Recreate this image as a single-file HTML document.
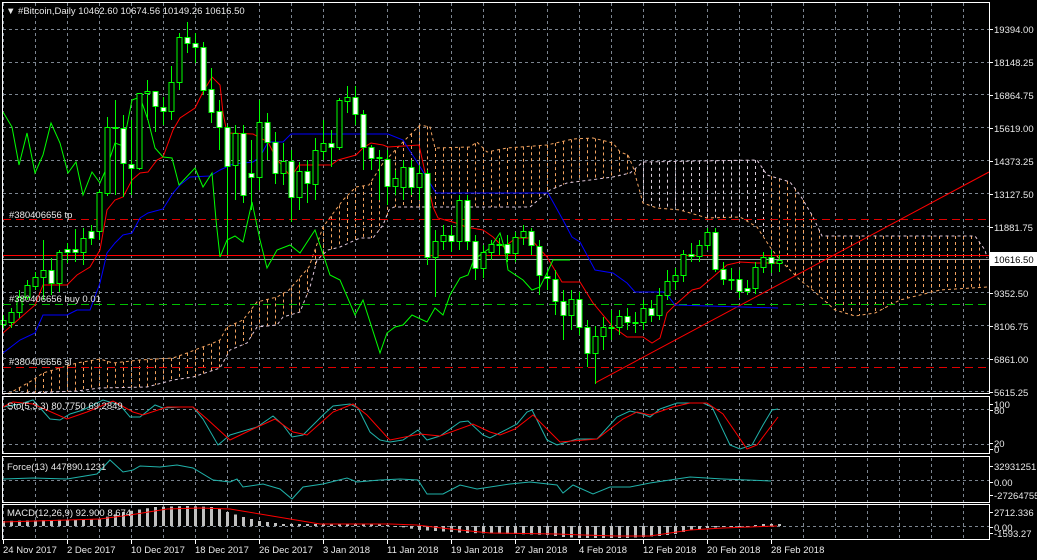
<!DOCTYPE html>
<html><head><meta charset="utf-8"><style>
html,body{margin:0;padding:0;background:#000;width:1037px;height:560px;overflow:hidden}
svg{display:block}
text{font-family:"Liberation Sans",sans-serif;font-size:9.5px;fill:#e8e8e8}
</style></head><body>
<svg id="s" width="1037" height="560" xmlns="http://www.w3.org/2000/svg">
<rect width="1037" height="560" fill="#000"/>
<g id="grid" stroke="#7c8590" stroke-width="1" stroke-dasharray="3,3"></g>
<g id="cloud"></g>
<g id="lines" fill="none"></g>
<g id="candles"></g>
<g id="ind" fill="none"></g>
<g id="frame" fill="none" stroke="#fff"></g>
<g id="txt"></g>
</svg>
<script>
var NS="http://www.w3.org/2000/svg";
function el(p,t,a,txt){var e=document.createElementNS(NS,t);for(var k in a)e.setAttribute(k,a[k]);if(txt!=null)e.textContent=txt;document.getElementById(p).appendChild(e);return e;}
function pl(p,pts,a){var s=pts.map(function(q){return q[0]+","+q[1]}).join(" ");a.points=s;a.fill="none";return el(p,"polyline",a);}
function interp(pts,x){if(x<=pts[0][0])return pts[0][1];for(var i=1;i<pts.length;i++){if(x<=pts[i][0]){var a=pts[i-1],b=pts[i];return a[1]+(b[1]-a[1])*(x-a[0])/(b[0]-a[0]);}}return pts[pts.length-1][1];}
var hy=[29,62,94,127,160,193,226,259,292,325,358,391];
hy.forEach(function(y){el("grid","line",{x1:3,y1:y+.5,x2:989,y2:y+.5});});
[409,444,480,526].forEach(function(y){el("grid","line",{x1:3,y1:y+.5,x2:989,y2:y+.5});});
for(var x=3;x<989;x+=32){[[3,394],[397,454],[458,502],[505,539]].forEach(function(r){el("grid","line",{x1:x+.5,y1:r[0],x2:x+.5,y2:r[1]});});}
var spanA=[[2,394],[10,393],[33,380],[43,373],[77,363],[100,359],[113,363],[140,360],[173,358],[187,353],[213,343],[220,340],[227,327],[243,320],[257,302],[277,297],[289,290],[309,267],[323,227],[343,200],[356,187],[369,185],[383,163],[403,142],[420,125],[430,127],[435,148],[470,147],[477,142],[487,152],[507,148],[547,145],[573,139],[593,138],[613,143],[620,152],[628,155],[633,167],[643,203],[657,208],[680,210],[697,215],[707,218],[740,217],[757,227],[770,247],[780,260],[800,280],[815,292],[835,310],[855,316],[875,313],[900,300],[940,290],[987,287]];
var spanB=[[2,394],[77,391],[100,388],[147,387],[173,380],[193,377],[220,368],[230,350],[247,343],[257,327],[277,325],[283,317],[300,312],[310,287],[317,260],[328,250],[340,247],[360,238],[373,238],[383,225],[389,210],[394,207],[530,207],[550,190],[567,183],[613,177],[630,173],[643,162],[757,160],[767,175],[790,182],[800,195],[812,215],[822,236],[840,236],[975,236],[985,250],[987,258]];
for(var x=11;x<987;x+=8){var a=interp(spanA,x),b=interp(spanB,x);var c=(x>640&&x<770)?"#dcd0dc":"#f4a460";el("cloud","line",{x1:x+.5,y1:Math.min(a,b),x2:x+.5,y2:Math.max(a,b),stroke:c,"stroke-dasharray":"3,3"});}
pl("cloud",spanA,{stroke:"#f4a460","stroke-dasharray":"3,3"});
pl("cloud",spanB,{stroke:"#e0c8dc","stroke-dasharray":"3,3"});
el("lines","line",{x1:3,y1:219.5,x2:989,y2:219.5,stroke:"#e00000","stroke-dasharray":"8,5"});
el("lines","line",{x1:3,y1:367.5,x2:989,y2:367.5,stroke:"#e00000","stroke-dasharray":"8,5"});
el("lines","line",{x1:3,y1:304.5,x2:989,y2:304.5,stroke:"#00c000","stroke-dasharray":"8,5"});
el("lines","line",{x1:3,y1:255.5,x2:989,y2:255.5,stroke:"#ff0000"});
el("lines","line",{x1:3,y1:259.5,x2:989,y2:259.5,stroke:"#a0a0a0"});
el("lines","line",{x1:595,y1:383,x2:989,y2:172,stroke:"#ff0000"});
pl("lines",[[3,333],[35,305],[43,285],[67,285],[77,275],[90,267],[100,250],[107,210],[115,200],[123,197],[132,180],[140,173],[148,172],[157,160],[163,157],[173,130],[180,118],[195,108],[203,92],[212,77],[220,85],[223,113],[227,133],[253,134],[268,142],[276,158],[291,177],[299,165],[331,165],[338,160],[356,155],[363,148],[371,143],[383,145],[388,147],[419,145],[423,163],[426,177],[433,207],[438,218],[456,223],[466,227],[483,230],[493,237],[499,243],[504,247],[516,238],[530,238],[538,247],[547,257],[562,282],[580,282],[593,303],[613,327],[627,337],[643,337],[652,343],[660,338],[667,313],[675,305],[692,290],[700,288],[713,277],[727,265],[740,262],[757,263],[780,263]],{stroke:"#ff0000"});
pl("lines",[[3,353],[20,340],[35,333],[43,315],[67,315],[77,310],[90,310],[100,283],[107,253],[115,243],[123,235],[132,233],[140,218],[148,213],[163,209],[173,193],[180,185],[190,177],[210,176],[220,170],[233,164],[253,162],[260,157],[268,142],[283,142],[291,134],[388,134],[403,140],[408,148],[419,165],[436,193],[548,193],[563,220],[572,237],[580,242],[595,270],[613,273],[627,283],[635,292],[665,292],[675,305],[778,308]],{stroke:"#0000ff"});
pl("lines",[[3,112],[12,127],[19,165],[27,133],[35,173],[43,155],[51,123],[60,143],[68,173],[76,162],[83,195],[92,172],[100,183],[107,167],[115,143],[123,146],[132,100],[140,97],[148,120],[155,148],[163,157],[172,158],[179,185],[195,168],[203,187],[212,173],[216,220],[220,257],[227,240],[235,236],[243,242],[252,202],[260,240],[267,268],[277,250],[290,245],[300,253],[315,230],[330,275],[340,280],[355,315],[363,300],[380,353],[387,333],[395,327],[403,325],[412,315],[427,322],[435,308],[443,315],[450,295],[460,278],[468,275],[473,262],[480,255],[490,248],[500,233],[505,250],[508,270],[523,280],[532,290],[540,287],[547,273],[553,260],[570,260]],{stroke:"#00ff00"});
var C=[[324,320,315,328],[322,312,308,328],[312,297,290,318],[297,285,280,300],[286,277,272,290],[277,270,240,300],[270,283,258,295],[283,252,250,292],[249,252,243,263],[249,252,229,262],[252,238,228,265],[231,238,225,245],[231,192,190,240],[193,127,117,196],[128,127,100,195],[128,163,115,197],[164,168,120,195],[168,93,93,170],[93,91,80,120],[91,106,91,132],[107,111,97,125],[111,82,66,120],[82,37,33,90],[37,43,22,53],[43,47,33,63],[47,90,42,95],[89,112,68,123],[111,127,100,150],[127,166,125,255],[165,133,125,200],[133,195,125,203],[173,177,140,210],[177,122,100,190],[122,142,113,160],[142,173,132,184],[173,161,143,185],[161,197,150,222],[197,171,162,210],[171,183,160,203],[184,150,138,200],[151,143,120,160],[143,147,130,167],[147,100,98,150],[101,97,86,113],[97,114,86,125],[114,147,110,170],[147,158,145,170],[158,157,150,200],[159,186,150,205],[186,178,170,195],[187,167,160,200],[167,187,160,195],[187,173,165,200],[173,257,170,265],[257,241,230,297],[241,235,225,250],[235,241,225,252],[241,200,195,250],[200,241,195,250],[241,268,235,280],[268,252,245,278],[252,244,240,260],[245,244,238,255],[244,253,235,262],[253,237,232,262],[237,231,225,245],[231,245,228,255],[246,275,240,295],[276,278,270,290],[279,301,270,315],[301,315,290,340],[315,299,290,330],[299,327,292,335],[327,353,320,367],[353,336,326,384],[336,327,317,350],[327,327,310,340],[327,316,310,335],[316,322,308,330],[322,322,312,333],[322,308,300,330],[308,315,300,322],[315,295,288,320],[295,281,270,300],[281,275,268,290],[275,254,250,282],[254,256,243,262],[256,245,240,262],[245,232,228,250],[232,269,228,272],[269,279,262,285],[279,279,268,290],[279,291,270,298],[288,291,280,295],[288,267,262,294],[267,257,252,273],[257,263,250,273],[263,260,255,272]];
C.forEach(function(c,i){var x=3+8*i;var o=c[0],cl=c[1];el("candles","line",{x1:x+.5,y1:c[2],x2:x+.5,y2:c[3],stroke:"#00ff00"});
var top=Math.min(o,cl),h=Math.max(1,Math.abs(o-cl));var bear=cl>o;
el("candles","rect",{x:x-2.5+.5,y:top+.5,width:5,height:h,fill:bear?"#fff":"#000",stroke:"#00ff00"});});
pl("ind",[[3,407],[20,404],[33,400],[50,419],[60,420],[70,414],[83,410],[103,400],[120,405],[130,417],[140,417],[155,405],[163,408],[180,407],[193,407],[203,419],[218,445],[230,435],[240,432],[257,427],[273,416],[283,425],[292,437],[303,435],[323,415],[333,406],[350,404],[358,408],[370,432],[380,440],[390,442],[403,440],[418,430],[427,440],[440,436],[460,422],[468,421],[483,435],[490,438],[517,424],[527,412],[532,410],[547,440],[557,445],[577,439],[597,439],[617,417],[630,411],[643,414],[650,417],[660,409],[677,403],[703,403],[712,407],[730,445],[740,449],[752,445],[763,425],[772,410],[778,409]],{stroke:"#20b2aa"});
pl("ind",[[3,407],[13,402],[33,404],[67,419],[87,412],[113,401],[133,412],[143,415],[167,407],[193,407],[207,419],[230,440],[253,429],[275,419],[293,432],[307,435],[333,412],[353,404],[367,415],[387,437],[390,440],[420,434],[440,436],[473,424],[490,432],[500,435],[515,429],[533,415],[547,429],[560,442],[597,439],[623,419],[637,412],[650,415],[673,407],[690,403],[707,403],[723,414],[747,449],[757,445],[778,417]],{stroke:"#ff0000"});
pl("ind",[[3,479],[33,478],[67,479],[97,474],[110,460],[123,472],[133,470],[140,466],[160,467],[177,465],[193,468],[213,480],[230,482],[237,479],[243,487],[263,484],[280,489],[292,499],[303,487],[323,484],[347,478],[357,482],[380,480],[400,479],[418,480],[427,494],[443,494],[460,485],[477,489],[510,484],[530,482],[557,485],[563,493],[573,485],[593,494],[610,487],[630,487],[650,483],[690,477],[723,479],[771,481]],{stroke:"#20b2aa"});
var H=[[0,521],[12,519],[15,512],[19,507],[23,506],[26,507],[27,509],[28,512],[30,517],[32,521],[35,524],[47,524],[49,526],[52,530],[58,533],[64,534],[68,535],[70,537],[72,538],[78,538],[82,536],[84,534],[86,530],[88,528],[90,527],[93,526],[95,524],[97,524]];
for(var i=0;i<98;i++){var v=interp(H,i);var x=3+8*i;var y1=Math.min(526,v),y2=Math.max(526,v);if(y2-y1<1)y2=y1+1;el("ind","rect",{x:x-1,y:y1,width:3,height:y2-y1,fill:"#c0c0c0"});}
pl("ind",[[3,522],[100,519],[130,515],[167,509],[200,508],[230,509],[290,519],[320,524],[390,524],[417,525],[450,529],[490,533],[557,534],[583,535],[617,536],[650,536],[690,530],[723,528],[777,526]],{stroke:"#ff0000"});
el("frame","rect",{x:2.5,y:2.5,width:987,height:391});
el("frame","line",{x1:2,y1:396.5,x2:990,y2:396.5});
el("frame","rect",{x:2.5,y:396.5,width:987,height:57});
el("frame","rect",{x:2.5,y:456.5,width:987,height:46});
el("frame","rect",{x:2.5,y:504.5,width:987,height:35});
var dl=["24 Nov 2017","2 Dec 2017","10 Dec 2017","18 Dec 2017","26 Dec 2017","3 Jan 2018","11 Jan 2018","19 Jan 2018","27 Jan 2018","4 Feb 2018","12 Feb 2018","20 Feb 2018","28 Feb 2018"];
dl.forEach(function(d,i){var x=3+64*i;el("frame","line",{x1:x+.5,y1:540,x2:x+.5,y2:544});el("txt","text",{x:x,y:553},d);});
var pa=[[29,"19394.00"],[62,"18148.25"],[95,"16864.75"],[128,"15619.00"],[161,"14373.25"],[194,"13127.50"],[227,"11881.75"],[293,"9352.50"],[326,"8106.75"],[359,"6861.00"],[392,"5615.25"],[404,"100"],[410,"80"],[443,"20"],[449,"0"],[466,"32931251.5"],[482,"0.00"],[495,"-27264755"],[512,"2712.336"],[527,"0.00"],[533,"-1593.27"]];
pa.forEach(function(p){el("frame","line",{x1:989,y1:p[0]+.5,x2:993,y2:p[0]+.5});el("txt","text",{x:994,y:p[0]+4},p[1]);});
el("txt","rect",{x:990,y:252,width:47,height:14,fill:"#fff"});
el("txt","text",{x:994,y:263,style:"fill:#000"},"10616.50");
el("txt","text",{x:6,y:14},"\u25BC #Bitcoin,Daily  10462.60 10674.56 10149.26 10616.50");
el("txt","text",{x:9,y:218},"#380406656 tp");
el("txt","text",{x:9,y:302},"#380406656 buy 0.01");
el("txt","text",{x:9,y:365},"#380406656 sl");
el("txt","text",{x:7,y:409},"Sto(5,3,3) 80.7750 69.2849");
el("txt","text",{x:7,y:470},"Force(13) 447890.1231");
el("txt","text",{x:7,y:516},"MACD(12,26,9) 92.900 8.674");
</script>
</body></html>
